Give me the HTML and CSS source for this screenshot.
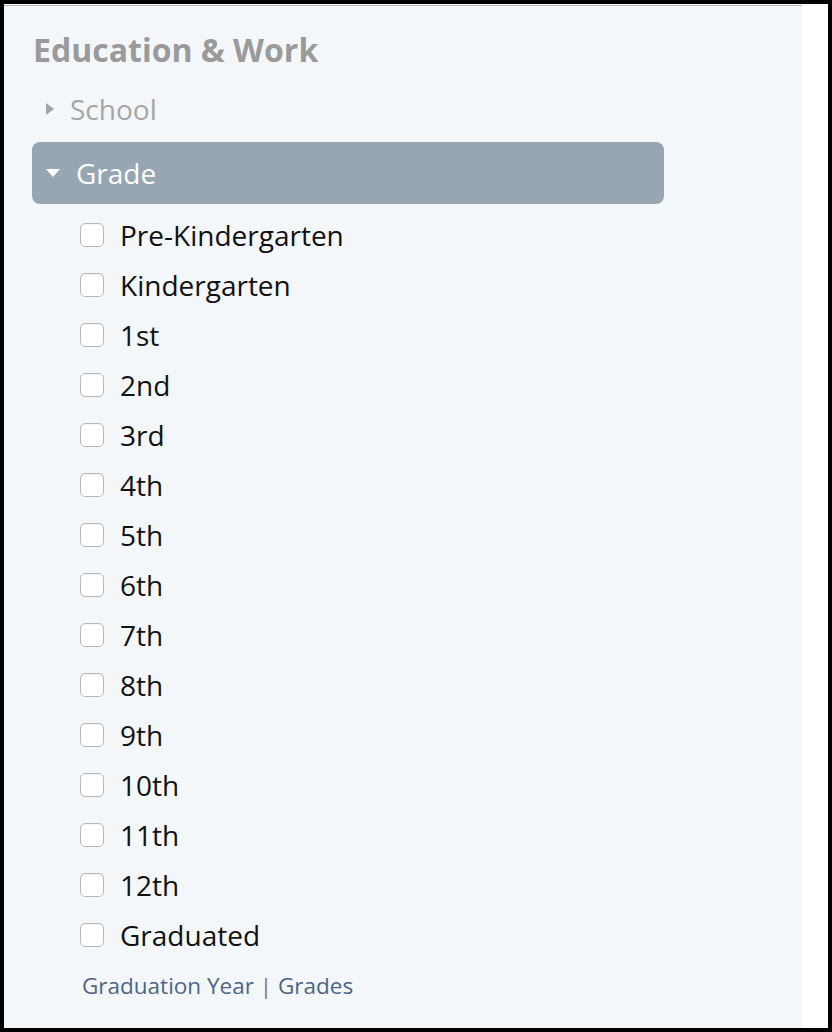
FILE: index.html
```html
<!DOCTYPE html>
<html lang="en">

<head>
    <meta charset="UTF-8">
    <meta name="viewport" content="width=device-width, initial-scale=1.0">
    <title>Filters</title>
    <link rel="stylesheet" href="styles.css">
</head>

<body>
    <div class="frame">
        <div class="sidebar">
            <h2 class="section-title">Education &amp; Work</h2>

            <div class="group collapsed">
                <svg class="caret" width="10" height="18" viewBox="0 0 10 18"><path d="M1 3 L9 9 L1 15 Z" /></svg>
                <span>School</span>
            </div>

            <div class="group open">
                <svg class="caret" width="16" height="10" viewBox="0 0 16 10"><path d="M1 1 L15 1 L8 9 Z" /></svg>
                <span>Grade</span>
            </div>

            <ul class="options">
                <li><label><input type="checkbox"><span class="box"></span>Pre-Kindergarten</label></li>
                <li><label><input type="checkbox"><span class="box"></span>Kindergarten</label></li>
                <li><label><input type="checkbox"><span class="box"></span>1st</label></li>
                <li><label><input type="checkbox"><span class="box"></span>2nd</label></li>
                <li><label><input type="checkbox"><span class="box"></span>3rd</label></li>
                <li><label><input type="checkbox"><span class="box"></span>4th</label></li>
                <li><label><input type="checkbox"><span class="box"></span>5th</label></li>
                <li><label><input type="checkbox"><span class="box"></span>6th</label></li>
                <li><label><input type="checkbox"><span class="box"></span>7th</label></li>
                <li><label><input type="checkbox"><span class="box"></span>8th</label></li>
                <li><label><input type="checkbox"><span class="box"></span>9th</label></li>
                <li><label><input type="checkbox"><span class="box"></span>10th</label></li>
                <li><label><input type="checkbox"><span class="box"></span>11th</label></li>
                <li><label><input type="checkbox"><span class="box"></span>12th</label></li>
                <li><label><input type="checkbox"><span class="box"></span>Graduated</label></li>
            </ul>

            <div class="switch">
                <a href="#">Graduation Year</a> <span class="sep">|</span> <a href="#">Grades</a>
            </div>
        </div>
    </div>
</body>

</html>
```

FILE: styles.css
```css
html,
body {
    margin: 0;
    padding: 0;
    height: 100%;
}

body {
    background-color: #000;
    /* black frame round the shot */
    padding: 4px;
    box-sizing: border-box;
    font-family: 'Open Sans', 'DejaVu Sans', sans-serif;
}

.frame {
    background-color: #fff;
    height: 100%;
    padding-top: 1px;
    box-sizing: border-box;
}

.sidebar {
    width: 798px;
    height: 100%;
    box-sizing: border-box;
    background-color: #f3f7fa;
    border-top: 1px solid #b4b6ba;
    padding: 22px 0 0 28px;
}

.section-title {
    margin: 0 0 15px 1px;
    font-size: 32px;
    font-weight: 700;
    color: #9a9a9a;
    line-height: 44px;
}

.group {
    display: flex;
    align-items: center;
    height: 62px;
    width: 632px;
    box-sizing: border-box;
    border-radius: 8px;
    font-size: 28px;
}

.collapsed {
    height: 44px;
    margin-bottom: 11px;
    padding-left: 13px;
    color: #a6a6a6;
}

.collapsed .caret {
    fill: #a6a6a6;
    margin-right: 15px;
}

.open {
    background-color: #96a6b3;
    color: #fff;
    padding-left: 13px;
}

.open .caret {
    fill: #fff;
    margin-right: 15px;
}

.options {
    list-style: none;
    margin: 6px 0 0 0;
    padding: 0 0 0 48px;
}

.options li {
    height: 50px;
    display: flex;
    align-items: center;
}

.options label {
    display: flex;
    align-items: center;
    font-size: 28px;
    color: #111;
    cursor: pointer;
}

.options input {
    display: none;
}

.box {
    width: 22px;
    height: 22px;
    border: 1px solid #b8b8b8;
    border-radius: 5px;
    background-color: #fff;
    margin-right: 16px;
    box-shadow: inset 0 1px 1px rgba(0, 0, 0, 0.05);
}

.switch {
    margin: 10px 0 0 50px;
    font-size: 22.5px;
    color: #4e6686;
}

.switch a {
    color: #4e6686;
    text-decoration: none;
}

.switch .sep {
    color: #777;
}
```
